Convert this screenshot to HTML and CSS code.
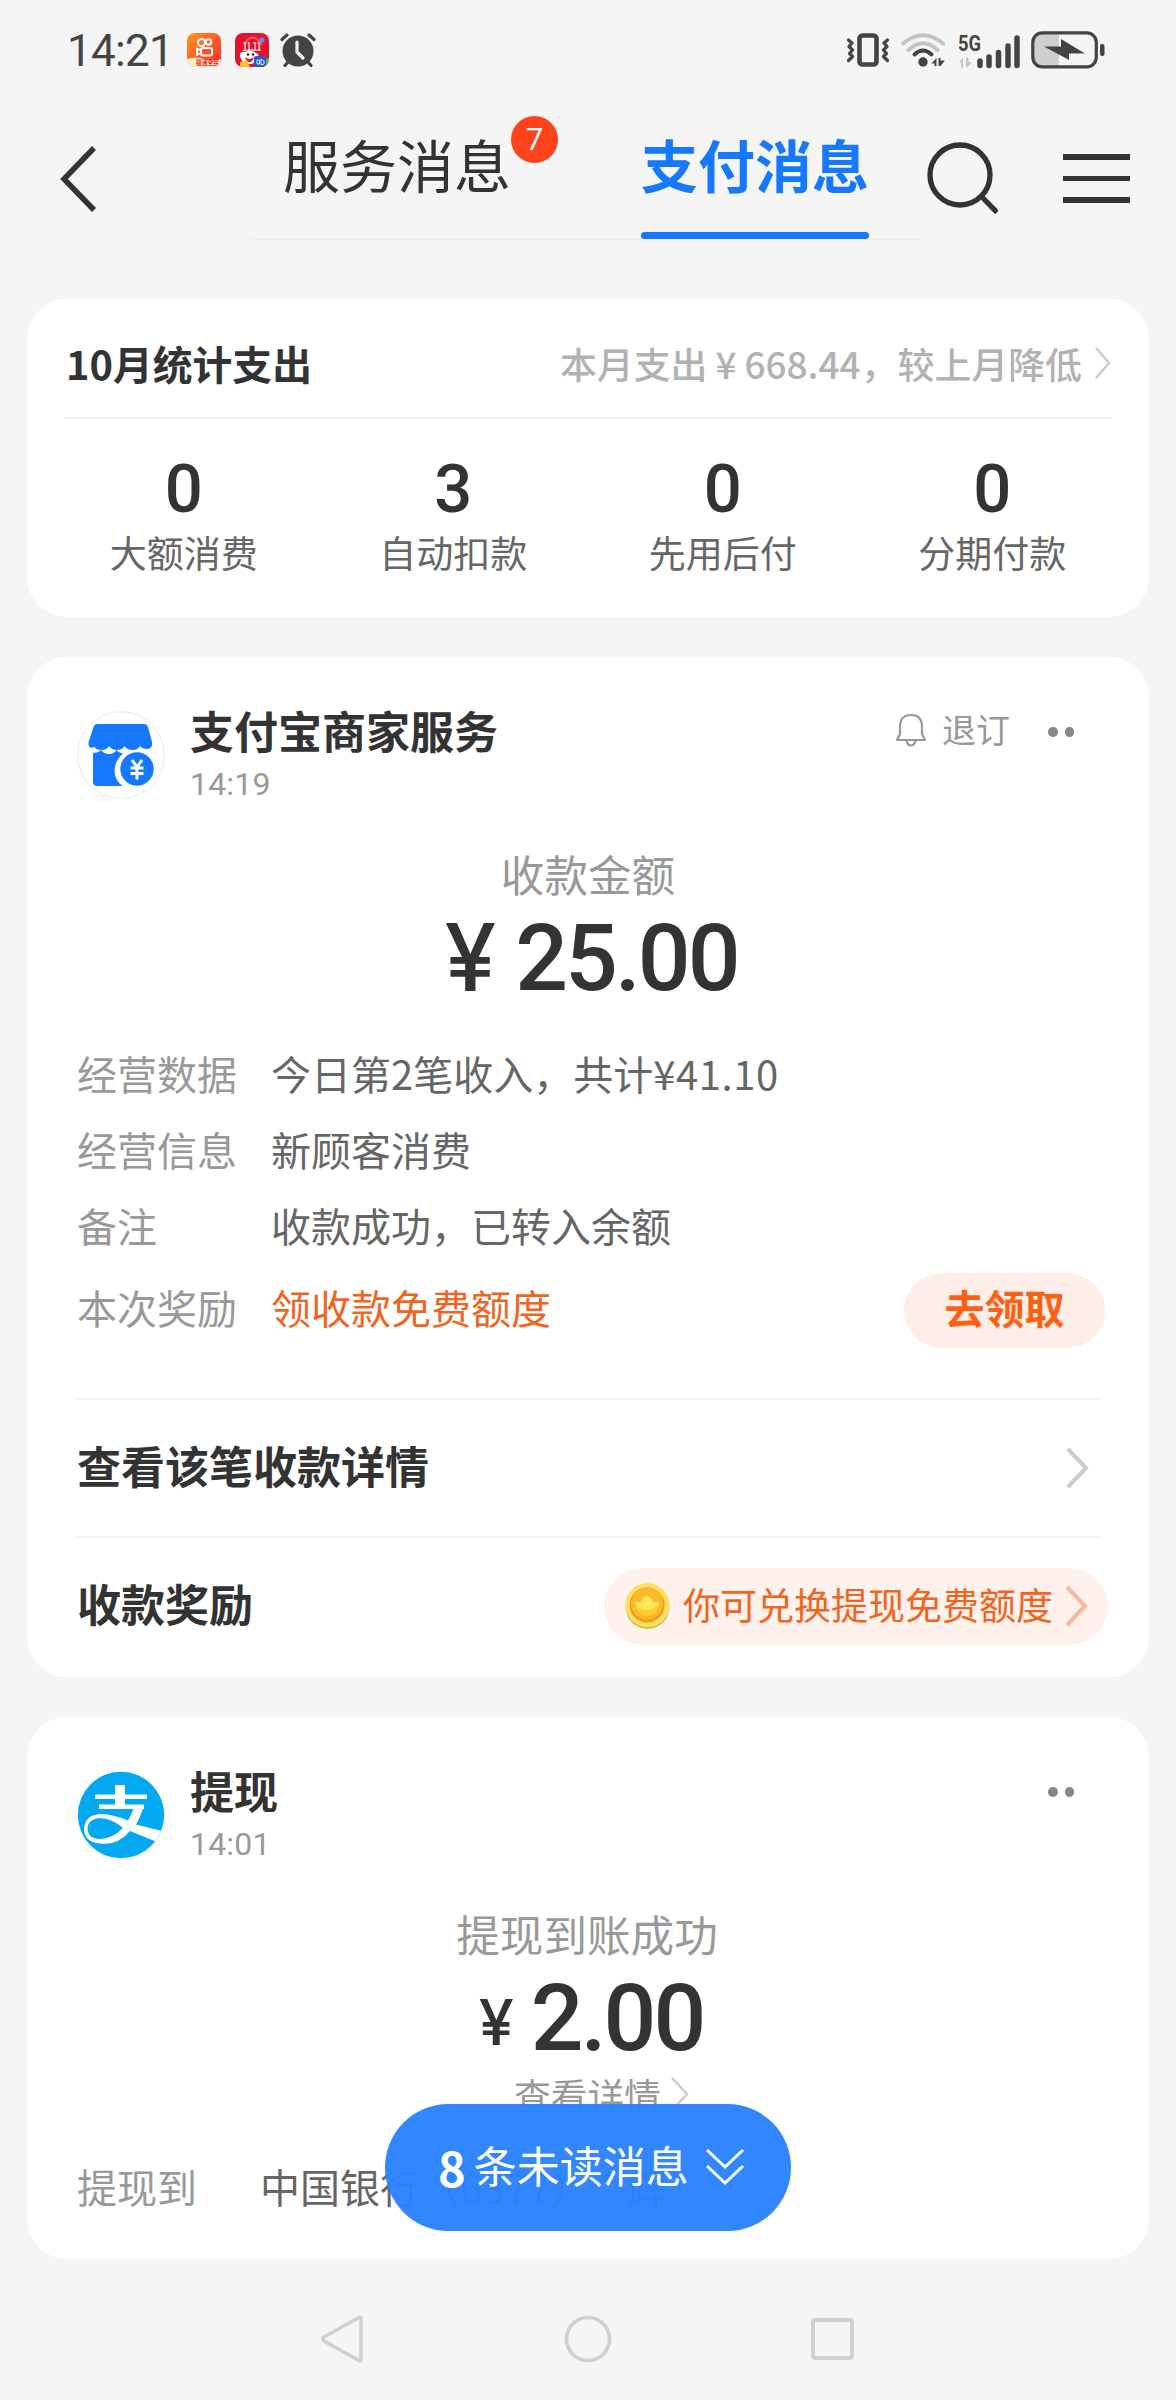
FILE: index.html
```html
<!DOCTYPE html>
<html lang="zh-CN">
<head>
<meta charset="utf-8">
<title>支付消息</title>
<link rel="stylesheet" href="styles.css">
</head>
<body>
<div class="phone">
  <div class="status">
    <span class="clock">14:21</span>
    <svg class="app" width="34" height="34" viewBox="0 0 34 34">
      <defs>
        <linearGradient id="ks" x1="0" y1="0" x2="1" y2="1"><stop offset="0" stop-color="#ff9a1f"/><stop offset=".5" stop-color="#ff5a2a"/><stop offset="1" stop-color="#f8302c"/></linearGradient>
        <clipPath id="rr"><rect width="34" height="34" rx="8"/></clipPath>
      </defs>
      <g clip-path="url(#rr)">
        <rect width="34" height="34" fill="url(#ks)"/>
        <g fill="none" stroke="#fff" stroke-width="2"><circle cx="14.5" cy="9.500" r="3.600"/><circle cx="21.500" cy="9" r="2.800"/><rect x="14" y="15" width="11" height="7.500" rx="2"/><path d="M14 17.500l-4-1.700v6l4-1.700"/></g>
        <path d="M0 26q9-3 17 0t17 0v8H0z" fill="#fff0c8"/>
        <text x="9" y="32" font-size="7" font-weight="700" fill="#e8281e" class="cjk" textLength="23" lengthAdjust="spacingAndGlyphs">极速全民</text>
      </g>
    </svg>
    <svg class="app app-2" width="34" height="34" viewBox="0 0 34 34">
      <g clip-path="url(#rr)">
        <rect width="34" height="34" fill="#e5122d"/>
        <path d="M9 12q8-15 18 0" fill="none" stroke="#f4586a" stroke-width="2"/>
        <circle cx="27" cy="7" r="2.600" fill="#5c8df0"/>
        <text x="8" y="18" font-size="12" font-weight="700" fill="#fff" class="cjk" textLength="18" lengthAdjust="spacingAndGlyphs">11.11</text>
        <path d="M5 24q-1-6 5-5 6-3 11 1 4 1 2 7l-6 4H9z" fill="#fff"/>
        <path d="M10 24q4 4 9 0-2 6-5 5-3 0-4-5z" fill="#e5122d"/><circle cx="13" cy="21.500" r="1.200" fill="#222"/><circle cx="18" cy="21.500" r="1.200" fill="#222"/>
        <path d="M5 29l7-2 3 7H5z" fill="#ffc12e"/><rect x="19" y="23" width="12" height="11" rx="2" fill="#2459cf"/>
        <path d="M22 27h2.500v4H22zm4-1l3 2v3l-3 1z" fill="none" stroke="#dfe8ff" stroke-width="1"/><path d="M31 26l3-1v9h-3z" fill="#57b85c"/>
      </g>
    </svg>
    <svg class="alarm" width="36" height="34" viewBox="0 0 36 34" fill="none" stroke="#444" stroke-linecap="round">
      <circle cx="18" cy="18" r="15.500" fill="#444" stroke="none"/>
      <path d="M2 6.500L7 2M34 6.500L29 2M8 29l-3 3.500M28 29l3 3.500" stroke-width="3.200"/>
      <path d="M17 9v10l6 6" stroke="#f5f5f5" stroke-width="3.200" stroke-linejoin="round"/>
    </svg>
    <div class="status-right">
      <svg width="42" height="34" viewBox="0 0 42 34" fill="none" stroke="#444">
        <rect x="12.500" y="2.500" width="17" height="29" rx="3" stroke-width="4.600"/>
        <path d="M1.500 7l3.500 3-3 3.500 3.500 3.500-3 3.500 3 3-4 4M40.500 7l-3.500 3 3 3.500-3.500 3.500 3 3.500-3 3 4 4" stroke-width="3.200" stroke-linecap="round" stroke-linejoin="round"/>
      </svg>
      <svg class="wifi" width="45" height="34" viewBox="0 0 45 34" fill="none" stroke-linecap="round">
        <path d="M2 10.500Q22 -6 42 10.500M7.500 17Q22 3.500 36.500 17" stroke="#c3c3c3" stroke-width="4"/>
        <path d="M13.500 21.500Q22 13.500 30.500 21.500" stroke="#444" stroke-width="4"/>
        <circle cx="22" cy="29" r="4.700" fill="#444"/>
        <path d="M30.500 30.500l5-5.500v8h-2v-2.500zM37.500 25v8h2l4.500-5.500h-4.500V25z" fill="#444"/>
      </svg>
      <svg class="signal" width="64" height="44" viewBox="0 -6 64 44">
        <text x="0" y="17" font-size="22" font-weight="700" fill="#444" textLength="23" lengthAdjust="spacingAndGlyphs" class="num">5G</text>
        <path d="M1 28l4-4.500V34H3v-6zM8 23.500h2.500V28H14l-5 5.500H8z" fill="#c3c3c3"/>
        <g stroke="#444" stroke-width="5.500" stroke-linecap="round"><path d="M22 27v4.500M31 23v8.500M40.500 18.500v13M50 12v19.500M59 4v27.500"/></g>
      </svg>
      <svg width="74" height="38" viewBox="0 0 74 38">
        <path d="M3 12Q3 3 12 3H28V35H12Q3 35 3 26z" fill="#cfcfcf"/>
        <rect x="1.800" y="1.800" width="63.500" height="34" rx="9.500" fill="none" stroke="#444" stroke-width="3.200"/>
        <path d="M13 15.500l17 0 0-7.500 24 14.500H38V29z" fill="#444"/>
        <rect x="69" y="13" width="4.500" height="12" rx="2" fill="#444"/>
      </svg>
    </div>
  </div>

  <div class="header">
    <div class="back"><svg width="40" height="66" viewBox="0 0 40 66"><path d="M36 2L6 33l30 31" fill="none" stroke="#333" stroke-width="5.500"/></svg></div>
    <div class="tabs">
      <div class="tab">服务消息<span class="badge">7</span></div>
      <div class="tab active">支付消息</div>
    </div>
    <svg class="search" width="72" height="74" viewBox="0 0 72 74" fill="none" stroke="#333" stroke-width="5.300"><circle cx="34" cy="34" r="30"/><path d="M55 55l16 16.500"/></svg>
    <div class="menu"><i></i><i></i><i></i></div>
  </div>

  <div class="card stats-card">
    <div class="stats-head">
      <span class="stats-title">10月统计支出</span>
      <span class="stats-note">本月支出<span class="yen">¥</span>668.44，较上月降低</span>
      <svg width="18" height="34" viewBox="0 0 18 34"><path d="M2 2l13 15L2 32" fill="none" stroke="#ccc" stroke-width="2.500"/></svg>
    </div>
    <div class="stats">
      <div><b>0</b><span>大额消费</span></div>
      <div><b>3</b><span>自动扣款</span></div>
      <div><b>0</b><span>先用后付</span></div>
      <div><b>0</b><span>分期付款</span></div>
    </div>
  </div>

  <div class="card pay-card">
    <div class="head">
      <svg class="avatar" width="88" height="88" viewBox="0 0 88 88">
        <circle cx="44" cy="44" r="43.300" fill="#fff" stroke="#eee" stroke-width="1.200"/>
        <path d="M20 13h47q3 0 4 3l4 15q1 7-5 7-5 0-7-3-2 4-7.500 4t-8-4q-2 4-7.500 4t-8-4q-2 4-7.500 4t-7-3Q11 39 11.500 31l5-15q1-3 3.500-3z" fill="#1677ff"/>
        <path d="M16 42q5 0 8-3 3 4 8 4t7.500-4q3 4 7 3-9 8-9 18 0 9 8 15H20q-4 0-4-4z" fill="#1677ff"/>
        <circle cx="60" cy="58" r="16.700" fill="#1677ff"/>
        <path d="M55 49l5 7 5-7M60 56v12.500M53.500 57h13M53.500 62.500h13" fill="none" stroke="#fff" stroke-width="3"/>
      </svg>
      <div class="who"><strong>支付宝商家服务</strong><time>14:19</time></div>
      <div class="actions">
        <svg width="32" height="34" viewBox="0 0 32 34" fill="none" stroke="#999" stroke-width="2.200" stroke-linejoin="round"><path d="M5 21V14Q5 2 16 2t11 12v7l3 6H2z"/><path d="M11.500 27.500q1 5 4.500 5t4.500-5"/></svg>
        <span>退订</span>
        <span class="dots"><i></i><i></i></span>
      </div>
    </div>
    <div class="caption">收款金额</div>
    <div class="amount"><span class="cur">¥</span><span>25.00</span></div>
    <dl class="rows">
      <div><dt>经营数据</dt><dd>今日第2笔收入，共计<span class="figure">¥41.10</span></dd></div>
      <div><dt>经营信息</dt><dd>新顾客消费</dd></div>
      <div><dt>备注</dt><dd>收款成功，已转入余额</dd></div>
      <div class="reward"><dt>本次奖励</dt><dd>领收款免费额度</dd><a class="claim">去领取</a></div>
    </dl>
    <div class="link-row detail"><span class="label">查看该笔收款详情</span>
      <svg width="24" height="42" viewBox="0 0 24 42"><path d="M2 2l18 19L2 40" fill="none" stroke="#ccc" stroke-width="4"/></svg>
    </div>
    <div class="link-row"><span class="label">收款奖励</span>
      <div class="promo">
        <svg width="45" height="46" viewBox="0 0 45 46">
          <ellipse cx="22.500" cy="24" rx="22" ry="22" fill="#e3bd37"/><circle cx="22.500" cy="22" r="22" fill="#ffe066"/>
          <circle cx="22" cy="22" r="17.500" fill="#f39a17"/><circle cx="22" cy="20.500" r="16" fill="#fcb92b"/>
          <path d="M10 19q3 0 6 0 1-5 6-6 5 1 6 6 3 0 6 0-1 12-12 13-11-1-12-13z" fill="#ffe95a"/><path d="M11 23q11 8 23-1-3 10-11 10-10 0-12-9z" fill="#ffd02b"/>
        </svg>
        <span>你可兑换提现免费额度</span>
        <svg width="24" height="42" viewBox="0 0 24 42"><path d="M2 2l18 19L2 40" fill="none" stroke="#f6b99f" stroke-width="4"/></svg>
      </div>
    </div>
  </div>

  <div class="card withdraw-card">
    <div class="head">
      <svg class="avatar" width="88" height="88" viewBox="0 0 88 88">
        <clipPath id="av"><circle cx="44" cy="44" r="43.200"/></clipPath>
        <g clip-path="url(#av)"><rect width="88" height="88" fill="#02a9f1"/>
        <path d="M38 14h10v23H38zM18 23.500h52v4.500H18zM22 33.500h45v4.500H22z" fill="#fff"/>
        <path d="M55 34.500h12Q63 47 59 53.500L85 60v13Q70 67 53 60 42 73 27 73 7 72 7 58 8 43 25 43q10 0 26 6.500 4-7 6-13zM46 57Q34 47 23 47q-12 1-12.500 10.500Q11 68 23 68q12 0 23-11z" fill="#fff" fill-rule="evenodd"/></g>
      </svg>
      <div class="who"><strong>提现</strong><time>14:01</time></div>
      <div class="actions"><span class="dots"><i></i><i></i></span></div>
    </div>
    <div class="caption">提现到账成功</div>
    <div class="amount small"><span class="cur">¥</span><span>2.00</span></div>
    <div class="more">查看详情<svg width="20" height="36" viewBox="0 0 20 36"><path d="M2 2l15 16L2 34" fill="none" stroke="#ccc" stroke-width="2.500"/></svg></div>
    <dl class="rows"><div><dt>提现到</dt><dd>中国银行（<span class="figure">6377</span>）<span class="masked">*</span>辉</dd></div></dl>
  </div>

  <div class="unread"><b>8</b><span>条未读消息</span>
    <svg width="40" height="38" viewBox="0 0 40 38"><path d="M2 2l18 17L38 2M2 18l18 17 18-17" fill="none" stroke="#fff" stroke-width="3"/></svg>
  </div>

  <div class="nav">
    <svg width="46" height="50" viewBox="0 0 46 50"><path d="M40 3.500Q42 2 42 5v40q0 3-2 1.500L5 27q-2.500-2 0-4z" fill="none" stroke="#d0d0d0" stroke-width="3.500"/></svg>
    <svg width="50" height="50" viewBox="0 0 50 50"><circle cx="25" cy="25" r="21.500" fill="none" stroke="#d0d0d0" stroke-width="3.700"/></svg>
    <svg width="46" height="50" viewBox="0 0 46 50"><rect x="2" y="6" width="39" height="38" rx="2" fill="none" stroke="#d0d0d0" stroke-width="3.800"/></svg>
  </div>
</div>
</body>
</html>
```
FILE: styles.css
```css
* { box-sizing: border-box; margin: 0; }
body { background: #f5f5f5; font-family: "Noto Sans CJK SC", sans-serif; color: #333; }
svg { display: block; flex: none; }
.phone { position: relative; width: 1176px; height: 2400px; overflow: hidden; background: #f5f5f5; }
.cjk { font-family: "Noto Sans CJK SC", sans-serif; }
.num, .clock, time, .amount, .stats b, .badge { font-family: Roboto, "Noto Sans CJK SC", sans-serif; }

/* status bar */
.status { display: flex; align-items: center; height: 98px; padding: 1px 71px 0 67px; }
.clock { width: 120px; font-size: 44px; line-height: 52px; letter-spacing: -.7px; color: #444; padding-top: 3px; }
.app-2 { margin-left: 14px; }
.alarm { margin-left: 11px; }
.status-right { display: flex; align-items: center; margin-left: auto; }
.wifi { margin-left: 12px; }
.signal { margin: 0 9px 0 12px; overflow: visible; }

/* title bar */
.header { display: flex; height: 201px; }
.back { width: 250px; padding: 48px 0 0 58px; }
.tabs { display: flex; gap: 130px; width: 675px; height: 142px; padding-left: 33px; border-bottom: 1px solid #eee; }
.tab { position: relative; width: 228px; height: 141px; padding-top: 25px; font-size: 57px; line-height: 80px; white-space: nowrap; }
.active { color: #1677ff; font-weight: 700; }
.active::after { content: ""; position: absolute; left: 0; bottom: 0; width: 228px; height: 7px; border-radius: 4px; background: #1677ff; }
.badge { position: absolute; left: 228px; top: 18px; width: 47px; height: 47px; border-radius: 50%; background: #ff411c; color: #fff; font-size: 31px; line-height: 48px; text-align: center; }
.search { margin: 43px 0 0 1px; }
.menu { display: flex; flex-direction: column; gap: 16px; margin: 56px 0 0 65px; }
.menu i { width: 67px; height: 5.5px; background: #333; }

/* cards */
.card { width: 1122px; margin: 0 27px 40px; border-radius: 40px; background: #fff; }
.stats-card { height: 318px; }
.stats-head { display: flex; align-items: center; height: 120px; margin: 0 37px; padding-top: 10px; border-bottom: 2px solid #f1f1f1; }
.stats-title { font-size: 39.8px; font-weight: 700; line-height: 50px; padding-left: 2px; }
.stats-note { margin: 0 12px 0 auto; font-size: 36.9px; font-weight: 500; line-height: 50px; color: #b2b2b2; white-space: nowrap; }
.yen { padding: 0 8px; }
.stats { display: grid; grid-template-columns: repeat(4, 1fr); margin: 37px 22px 0; text-align: center; }
.stats b { display: block; font-size: 67px; line-height: 66px; font-weight: 500; }
.stats span { display: block; margin-top: 6px; font-size: 37px; line-height: 48px; color: #666; }

.pay-card { height: 1020px; padding: 48px 50px 0; }
.head { display: flex; height: 94px; }
.avatar { margin-top: 6px; }
.who { margin-left: 25px; }
.who strong { display: block; font-size: 44px; line-height: 50px; font-weight: 700; }
time { display: block; margin-top: 13px; font-size: 32px; line-height: 32px; color: #999; letter-spacing: .2px; }
.actions { display: flex; align-items: center; height: 49px; margin-left: auto; padding-right: 25px; font-size: 34px; line-height: 49px; color: #999; }
.actions span:first-of-type:not(.dots) { margin-top: -2px; }
.actions svg { margin-right: 15px; }
.dots { display: flex; gap: 7px; margin: 5px 0 0 38px; }
.dots i { width: 9.5px; height: 9.5px; border-radius: 50%; background: #888; }
.caption { margin-top: 48px; font-size: 43.6px; line-height: 52px; text-align: center; color: #999; }
.amount { display: flex; justify-content: center; height: 94px; margin-top: 13px; padding-left: 6px; font-size: 93px; line-height: 94px; font-weight: 500; letter-spacing: -3px; }
.cur { margin-right: 19px; font-family: Inter, sans-serif; letter-spacing: 0; line-height: 90px; }
.small .cur { font-size: 63px; line-height: 100px; margin-right: 17px; }

.rows { margin-top: 29px; font-size: 40px; line-height: 76px; }
.rows div { display: flex; height: 76px; }
.rows dt { width: 194px; color: #999; }
.rows dd { color: #666; white-space: nowrap; }
.figure { letter-spacing: .6px; }
.masked { display: inline-block; width: 36px; text-align: center; }
.rows .reward { height: 88px; line-height: 88px; }
.reward dd { color: #f0641e; }
.claim { width: 201px; height: 75px; margin: 10px -6px 0 auto; border-radius: 38px; background: #ffeee8; color: #ff5f11; font-weight: 700; line-height: 69px; text-align: center; }
.link-row { display: flex; align-items: center; justify-content: space-between; height: 138px; margin-right: -1px; border-top: 2px solid #f3f3f3; font-size: 44px; font-weight: 700; }
.link-row .label { margin-top: -6px; }
.detail { margin-top: 47px; padding-right: 10px; }
.promo { display: flex; align-items: center; width: 504px; height: 77px; margin-right: -8px; padding-left: 21px; border-radius: 39px; background: #fff1ec; color: #f0641e; font-size: 37px; font-weight: 400; line-height: 77px; }
.promo span { margin: -4px 12px 0 13px; }

.withdraw-card { height: 542px; margin-bottom: 0; padding: 48px 50px 0; }
.withdraw-card .caption { margin-left: -2px; }
.more { display: flex; align-items: center; justify-content: center; gap: 9px; margin-top: 4px; padding-left: 28px; font-size: 36.7px; line-height: 48px; color: #999; }
.withdraw-card .rows { margin-top: 30px; }
.withdraw-card dt { width: 183px; }

.unread { position: absolute; left: 385px; top: 2104px; display: flex; align-items: center; width: 406px; height: 127px; padding-left: 53px; border-radius: 64px; background: rgba(42, 130, 255, .96); color: #fff; font-size: 43px; }
.unread b { margin-top: -3px; font-size: 47px; }
.unread span { margin: -7px 16px 0 8px; }
.unread svg { margin-top: -2px; }

.nav { display: flex; justify-content: center; align-items: center; height: 141px; padding-top: 19px; }
.nav svg:nth-child(2) { margin: 0 198px; }
```
